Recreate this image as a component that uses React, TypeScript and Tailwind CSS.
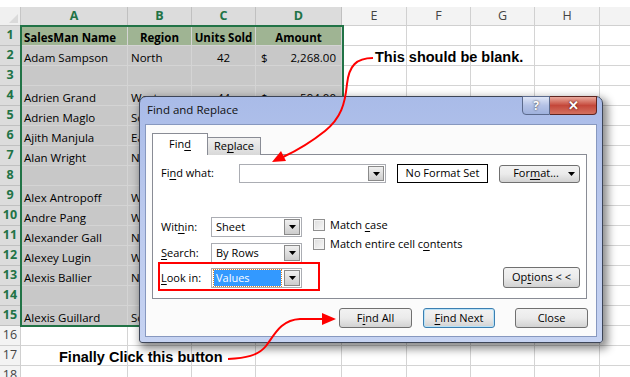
import React from 'react';

const COLS = [
  { k: 'A', w: 'w-[107px]', sel: true },
  { k: 'B', w: 'w-[64px]', sel: true },
  { k: 'C', w: 'w-[64px]', sel: true },
  { k: 'D', w: 'w-[86px]', sel: true },
  { k: 'E', w: 'w-[65px]', sel: false },
  { k: 'F', w: 'w-[64px]', sel: false },
  { k: 'G', w: 'w-[64px]', sel: false },
  { k: 'H', w: 'w-[65px]', sel: false },
  { k: 'I', w: 'w-[65px]', sel: false },
];

const ROWS: string[][] = [
  ['SalesMan Name', 'Region', 'Units Sold', 'Amount'],
  ['Adam Sampson', 'North', '42', '2,268.00'],
  [],
  ['Adrien Grand', 'West', '44', '594.00'],
  ['Adrien Maglo', 'South', '31', '1,024.00'],
  ['Ajith Manjula', 'East', '27', '891.00'],
  ['Alan Wright', 'North', '36', '1,188.00'],
  [],
  ['Alex Antropoff', 'West', '19', '627.00'],
  ['Andre Pang', 'West', '23', '759.00'],
  ['Alexander Gall', 'North', '40', '1,320.00'],
  ['Alexey Lugin', 'West', '15', '495.00'],
  ['Alexis Ballier', 'North', '28', '924.00'],
  [],
  ['Alexis Guillard', 'South', '33', '1,089.00'],
  [],
  [],
  [],
];

const sheetFont = "font-['Open_Sans',sans-serif]";
const uiFont = "font-['Open_Sans',sans-serif]";

function U({ children }: { children: React.ReactNode }) {
  return <span className="underline underline-offset-2">{children}</span>;
}

function Arrow() {
  return (
    <svg width="7" height="4" viewBox="0 0 7 4">
      <path d="M0 0H7L3.5 4Z" fill="#000" />
    </svg>
  );
}

function Combo({ w, value, highlight }: { w: string; value?: string; highlight?: boolean }) {
  return (
    <div className={`${w} h-full flex border border-[#abadb3] bg-white`}>
      <div className="flex-1 flex items-center px-[2px] min-w-0">
        {value &&
          (highlight ? (
            <div className="w-full h-[16px] flex items-center bg-[#3399ff] text-white pl-[2px] outline outline-1 outline-dotted outline-[#d9822b]">
              {value}
            </div>
          ) : (
            <span className="pl-[2px]">{value}</span>
          ))}
      </div>
      <div className="w-[16px] m-px flex items-center justify-center border border-[#8a8a8a] bg-gradient-to-b from-[#f0f0f0] to-[#cdcdcd]">
        <Arrow />
      </div>
    </div>
  );
}

function Btn({ children, w, focus }: { children: React.ReactNode; w: string; focus?: boolean }) {
  return (
    <div
      className={`${w} h-full flex items-center justify-center rounded-[3px] border ${
        focus ? 'border-[#3c7fb1] shadow-[inset_0_0_0_1px_#b9e2f7]' : 'border-[#707070]'
      } bg-gradient-to-b from-[#f2f2f2] via-[#ebebeb] to-[#d2d2d2]`}
    >
      {children}
    </div>
  );
}

function Check({ children }: { children: React.ReactNode }) {
  return (
    <div className="flex items-center h-[12px]">
      <div className="w-[12px] h-[12px] border border-[#8f8f8f] bg-gradient-to-br from-[#dcdcdc] to-[#f8f8f8] shadow-[inset_0_0_0_1px_#f4f4f4]" />
      <span className="ml-[5px]">{children}</span>
    </div>
  );
}

function Dialog() {
  return (
    <div
      className={`absolute left-[139px] top-[96px] w-[464px] h-[247px] flex flex-col rounded-t-[7px] rounded-b-[3px] border border-[#3d4557] bg-gradient-to-b from-[#a9bbe8] via-[#bccaee] to-[#c6d3f2] shadow-[3px_4px_8px_2px_rgba(0,0,0,0.45)] ${uiFont} text-[11px] text-black`}
    >
      <div className="h-[27px] flex justify-between">
        <span className="pl-[7px] pt-[4px] text-[11.5px] text-[#111]">Find and Replace</span>
        <div className="flex self-start -mt-px mr-[5px] h-[19px]">
          <div className="w-[28px] flex items-center justify-center rounded-bl-[4px] border border-[#5b6a8c] bg-gradient-to-b from-[#dfe6f7] via-[#b4c2e6] to-[#9fb1dd] text-white font-bold text-[12px] [text-shadow:0_0_2px_#222]">
              ?
          </div>
          <div className="w-[47px] flex items-center justify-center rounded-br-[4px] border border-l-0 border-[#5e2520] bg-gradient-to-b from-[#e9a99e] via-[#c4473a] to-[#d3705f] text-white font-bold text-[13px] [text-shadow:0_0_2px_#300]">
            ✕
          </div>
        </div>
      </div>
      <div className="mx-[5px] h-[213px] border border-[#8798bf] bg-[#fbfbfb] pl-[6px] pt-[7px]">
        <div className="flex items-end h-[22px]">
          <div className="relative z-10 -mb-px w-[56px] h-[22px] flex items-center justify-center border border-b-0 border-[#898c95] bg-white">
            <span>
              Fin<U>d</U>
            </span>
          </div>
          <div className="-mb-px w-[53px] h-[18px] flex items-center justify-center border border-l-0 border-b-0 border-[#898c95] bg-gradient-to-b from-[#f0f0f0] to-[#d8d8d8]">
            <span>
              Re<U>p</U>lace
            </span>
          </div>
        </div>
        <div className="w-[435px] h-[145px] border border-[#898c95] bg-white pl-[8px]">
          <div className="mt-[9px] h-[19px] flex items-center">
            <span className="w-[78px]">
              Fi<U>n</U>d what:
            </span>
            <Combo w="w-[147px]" />
            <div className="ml-[11px] w-[91px] h-full flex items-center justify-center border border-black">No Format Set</div>
            <div className="ml-[11px] h-[18px]">
              <Btn w="w-[81px]">
                <span className="flex-1 text-center pl-[4px]">
                  For<U>m</U>at...
                </span>
                <span className="pr-[4px]">
                  <Arrow />
                </span>
              </Btn>
            </div>
          </div>
          <div className="mt-[34px] flex">
            <div className="flex flex-col">
              <div className="h-[20px] flex items-center">
                <span className="w-[50px]">
                  Wit<U>h</U>in:
                </span>
                <Combo w="w-[91px]" value="Sheet" />
              </div>
              <div className="mt-[6px] h-[20px] flex items-center">
                <span className="w-[50px]">
                  <U>S</U>earch:
                </span>
                <Combo w="w-[91px]" value="By Rows" />
              </div>
              <div className="mt-[5px] h-[20px] flex items-center">
                <span className="w-[50px]">
                  <U>L</U>ook in:
                </span>
                <Combo w="w-[91px]" value="Values" highlight />
              </div>
            </div>
            <div className="ml-[11px] pt-[2px] flex flex-col gap-[7px]">
              <Check>
                Match <U>c</U>ase
              </Check>
              <Check>
                Match entire cell c<U>o</U>ntents
              </Check>
            </div>
            <div className="ml-auto mr-[6px] flex flex-col justify-end">
              <div className="h-[21px]">
                <Btn w="w-[77px]">
                  <span>
                    Op<U>t</U>ions &lt; &lt;
                  </span>
                </Btn>
              </div>
            </div>
          </div>
        </div>
        <div className="mt-[9px] h-[20px] flex justify-end pr-[8px]">
          <Btn w="w-[73px]">
            <span>
              F<U>i</U>nd All
            </span>
          </Btn>
          <div className="ml-[11px] h-full">
            <Btn w="w-[72px]" focus>
              <span>
                <U>F</U>ind Next
              </span>
            </Btn>
          </div>
          <div className="ml-[20px] h-full">
            <Btn w="w-[73px]">
              <span>Close</span>
            </Btn>
          </div>
        </div>
      </div>
    </div>
  );
}

function Cell({ ci, ri, text }: { ci: number; ri: number; text?: string }) {
  const col = COLS[ci];
  const inSel = col.sel && ri < 15;
  const bg = inSel ? (ri === 0 ? 'bg-[#9fb493]' : 'bg-[#c8c8c8]') : 'bg-white';
  let content: React.ReactNode = null;
  if (text) {
    if (ri === 0) {
      content =
        ci === 0 ? (
          <span className="pl-[3px] font-bold">{text}</span>
        ) : (
          <span className="w-full text-center font-bold">{text}</span>
        );
    } else if (ci === 2) {
      content = <span className="w-full text-center">{text}</span>;
    } else if (ci === 3) {
      content = (
        <span className="w-full flex justify-between pl-[5px] pr-[5px]">
          <span>$</span>
          <span>{text}</span>
        </span>
      );
    } else {
      content = <span className="pl-[3px] whitespace-nowrap">{text}</span>;
    }
  }
  return (
    <div
      className={`${col.w} shrink-0 h-[20px] flex items-end leading-[15px] overflow-hidden border-r border-b border-[#d4d4d4] ${bg}`}
    >
      {content}
    </div>
  );
}

function Sheet() {
  return (
    <div className={`${sheetFont} text-[11.5px] text-black pt-[7px]`}>
      <div className="flex h-[19px]">
        <div className="w-[21px] shrink-0 flex items-end justify-end p-[2px] bg-[#f0f0f0] border-r border-b border-[#c6c6c6]">
          <svg width="9" height="9" viewBox="0 0 9 9">
            <path d="M9 0V9H0Z" fill="#dadada" />
          </svg>
        </div>
        {COLS.map((c) => (
          <div
            key={c.k}
            className={`${c.w} shrink-0 flex items-center justify-center border-r border-b text-[12.5px] ${
              c.sel
                ? 'bg-[#dcdcdc] border-r-[#c0c0c0] border-b-[#217346] font-bold text-[#217346]'
                : 'bg-[#f3f3f3] border-[#d0d0d0] text-[#444]'
            }`}
          >
            {c.k}
          </div>
        ))}
      </div>
      {ROWS.map((r, ri) => (
        <div key={ri} className="flex">
          <div
            className={`w-[21px] shrink-0 h-[20px] flex items-center justify-center border-b border-r text-[12.5px] ${
              ri < 15
                ? 'bg-[#dcdcdc] border-b-[#c0c0c0] border-r-[#217346] font-bold text-[#217346]'
                : 'bg-[#f3f3f3] border-[#d0d0d0] text-[#444]'
            }`}
          >
            {ri + 1}
          </div>
          {COLS.map((c, ci) => (
            <Cell key={c.k} ci={ci} ri={ri} text={r[ci]} />
          ))}
        </div>
      ))}
    </div>
  );
}

export default function App() {
  return (
    <div className="relative w-[630px] h-[377px] overflow-hidden bg-white">
      <Sheet />
      {/* selection outline */}
      <div className="absolute left-[20px] top-[25px] w-[324px] h-[302px] border-2 border-[#217346] pointer-events-none" />
      <Dialog />
      {/* callout box around Look in */}
      <div className="absolute left-[158px] top-[262px] w-[162px] h-[29px] border-2 border-[#ff0000]" />
      <svg className="absolute left-0 top-0 pointer-events-none" width="630" height="377" viewBox="0 0 630 377">
        <path d="M373,58 C356,58 349,66 347,84 C345,104 341,118 325,131 C310,143 296,151 283,157" stroke="#ff0000" strokeWidth="2" fill="none" />
        <polygon points="272,162 286,161 281,151" fill="#ff0000" />
        <path d="M228,359 C245,358 258,356 266,346 C274,336 280,320 300,319 L324,319" stroke="#ff0000" strokeWidth="2" fill="none" />
        <polygon points="336,319 322,313 322,325" fill="#ff0000" />
      </svg>
      <span className="absolute left-[375px] top-[48px] font-['Liberation_Sans',sans-serif] font-bold text-[14.5px] leading-[18px] text-black whitespace-nowrap">
        This should be blank.
      </span>
      <span className="absolute left-[59px] top-[348px] font-['Liberation_Sans',sans-serif] font-bold text-[14.5px] leading-[18px] text-black whitespace-nowrap">
        Finally Click this button
      </span>
    </div>
  );
}
